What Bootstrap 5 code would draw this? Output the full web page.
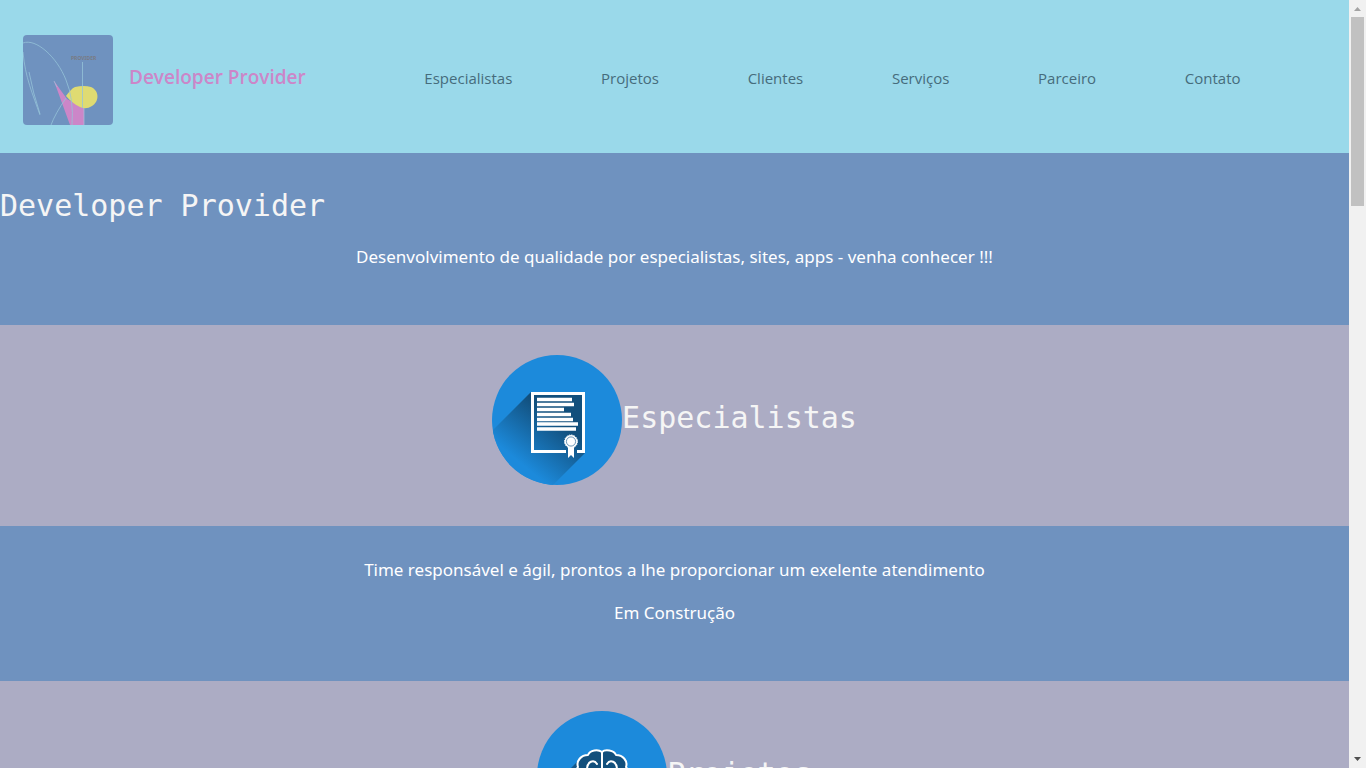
<!DOCTYPE html>
<html lang="pt-br">
<head>
<meta charset="utf-8">
<meta name="viewport" content="width=device-width, initial-scale=1">
<title>Developer Provider</title>
<link href="https://cdn.jsdelivr.net/npm/bootstrap@5.3.0/dist/css/bootstrap.min.css" rel="stylesheet">
<style>
  body { font-family: "Noto Sans", "Open Sans", sans-serif; font-size: 17px; line-height: 27px; color: #fff; background: #acacc4; }
  .top-bar { background: #9ad9ea; padding: 35px 64px 28px 23px; }
  .brand-area { flex: 0 0 357px; }
  .brand-logo { width: 90px; height: 90px; border-radius: 4px; }
  .brand-name { font-family: "Open Sans", sans-serif; font-size: 19px; line-height: 28px; font-weight: 600; color: #cc86c8; padding-bottom: 6px; }
  .menu-link { font-family: "Open Sans", sans-serif; font-size: 15px; line-height: 24px; font-weight: 400; color: #466c7c; }
  .blue-band { background: #6f92bf; }
  .intro { padding: 35px 0 55px; }
  .about { padding: 30px 0 55px; }
  .lilac-band { background: #acacc4; padding: 30px 0 41px; }
  .band-title { font-family: "DejaVu Sans Mono", monospace; font-size: 30px; line-height: 36px; font-weight: 400; color: #f5f5f5; }
  .intro .band-title { margin-bottom: 19px; }
  .band-icon { width: 130px; height: 130px; }
  .scroll-track { flex: 0 0 17px; background: #f1f1f1; }
  .scroll-thumb { width: 13px; height: 189px; background: #c1c1c1; }
</style>
</head>
<body>
<div class="d-flex vh-100 overflow-hidden">
  <div class="flex-grow-1 overflow-hidden">
    <header class="top-bar d-flex align-items-center">
      <a href="#" class="brand-area d-flex align-items-center gap-3 text-decoration-none">
        <svg class="brand-logo" viewBox="0 0 90 90" role="img" aria-label="Logo">
          <rect width="90" height="90" fill="#6f92bf"/>
          <path d="M31 46 44 64 60 73 61 73 61 90 47 90Z" fill="#cc86c8"/>
          <path d="M43 61C46 57 49 53 52 52Q61 50 68 52C77 56 76 67 69 71Q63 75 57 72Q50 69 43 61Z" fill="#dfdb72"/>
          <g fill="none" stroke="#96c3d8" stroke-width=".8">
            <path d="M0 8C13 3 34 22 43 45Q51 64 49 90M0 17C2 42 10 60 17 80M6 37Q10 58 17 79M28 90Q32 79 43 63M59.500 27V73"/>
            <path d="M31 46l3 6M61 73v17" stroke="#a9bad8"/>
          </g>
          <text x="48" y="25" font-size="5" fill="#787b85" font-weight="bold">PROVIDER</text>
        </svg>
        <span class="brand-name">Developer Provider</span>
      </a>
      <nav class="flex-grow-1 d-flex justify-content-around pb-1">
        <a class="menu-link text-decoration-none" href="#especialistas">Especialistas</a>
        <a class="menu-link text-decoration-none" href="#projetos">Projetos</a>
        <a class="menu-link text-decoration-none" href="#clientes">Clientes</a>
        <a class="menu-link text-decoration-none" href="#servicos">Serviços</a>
        <a class="menu-link text-decoration-none" href="#parceiro">Parceiro</a>
        <a class="menu-link text-decoration-none" href="#contato">Contato</a>
      </nav>
    </header>
    <main>
      <section class="blue-band intro">
        <h1 class="band-title">Developer Provider</h1>
        <p class="text-center mb-0">Desenvolvimento de qualidade por especialistas, sites, apps - venha conhecer !!!</p>
      </section>
      <section class="lilac-band d-flex justify-content-center align-items-center" id="especialistas">
        <svg class="band-icon" viewBox="0 0 130 130" aria-hidden="true">
          <defs>
            <linearGradient id="shade" gradientUnits="userSpaceOnUse" x1="62" y1="62" x2="26" y2="106">
              <stop offset="0" stop-color="#124f7c"/><stop offset="1" stop-color="#1c8adb"/>
            </linearGradient>
            <clipPath id="disc"><circle cx="65" cy="65" r="65"/></clipPath>
          </defs>
          <g clip-path="url(#disc)">
            <rect width="130" height="130" fill="#1c8adb"/>
            <path d="M39 37H93V98L61 130H0V76Z" fill="url(#shade)"/>
          </g>
          <path d="M74 96.500H40.500V38.500H91.500V96.500H85" fill="none" stroke="#fff" stroke-width="3"/>
          <path d="M45 44.500H80M45 49.500H82M45 54.500H72M45 59.500H79M45 64.500H81M45 69H86M45 74H84" stroke="#fff" stroke-width="3.400"/>
          <path d="M76 90h6v13l-3-3-3 3Z" fill="#fff"/>
          <circle cx="79" cy="86.500" r="6.500" fill="#fff" stroke="#fff" stroke-dasharray="1.500 1"/>
          <circle cx="79" cy="86.500" r="4.600" fill="none" stroke="#2f6c9a" stroke-width=".7"/>
        </svg>
        <h2 class="band-title mb-1">Especialistas</h2>
      </section>
      <section class="blue-band about text-center">
        <p class="mb-3">Time responsável e ágil, prontos a lhe proporcionar um exelente atendimento</p>
        <p class="mb-0">Em Construção</p>
      </section>
      <section class="lilac-band d-flex justify-content-center align-items-center" id="projetos">
        <svg class="band-icon" viewBox="0 0 130 130" aria-hidden="true">
          <defs>
            <linearGradient id="shade2" gradientUnits="userSpaceOnUse" x1="55" y1="60" x2="20" y2="100">
              <stop offset="0" stop-color="#124f7c"/><stop offset="1" stop-color="#1c8adb"/>
            </linearGradient>
          </defs>
          <circle cx="65" cy="65" r="65" fill="#1c8adb"/>
          <path d="M44 47 5 86 45 126 90 85V60Z" fill="url(#shade2)"/>
          <g fill="#124f7c" stroke="#fff" stroke-width="2" stroke-linecap="round" stroke-linejoin="round">
            <path d="M65 41C61 38 53 39 51 44C44 44 39 50 41 56C35 64 40 74 48 75C52 84 61 85 65 80C69 85 78 84 82 75C90 74 95 64 89 56C91 50 86 44 79 44C77 39 68 38 65 41Z"/>
            <path d="M65 41V81M60 53C57 48 50 50 50 59M70 53C73 48 80 50 80 59M52 69Q57 65 59 70M78 69Q73 65 71 70" fill="none"/>
          </g>
        </svg>
        <h2 class="band-title mb-1">Projetos</h2>
      </section>
    </main>
  </div>
  <div class="scroll-track d-flex flex-column align-items-center" aria-hidden="true">
    <svg width="17" height="17" viewBox="0 0 17 17"><path d="M5 11 8.500 7 12 11Z" fill="#a3a3a3"/></svg>
    <div class="scroll-thumb"></div>
    <svg class="mt-auto" width="17" height="17" viewBox="0 0 17 17"><path d="M5 6H12L8.500 10Z" fill="#505050"/></svg>
  </div>
</div>
<script src="https://cdn.jsdelivr.net/npm/bootstrap@5.3.0/dist/js/bootstrap.bundle.min.js"></script>
</body>
</html>
